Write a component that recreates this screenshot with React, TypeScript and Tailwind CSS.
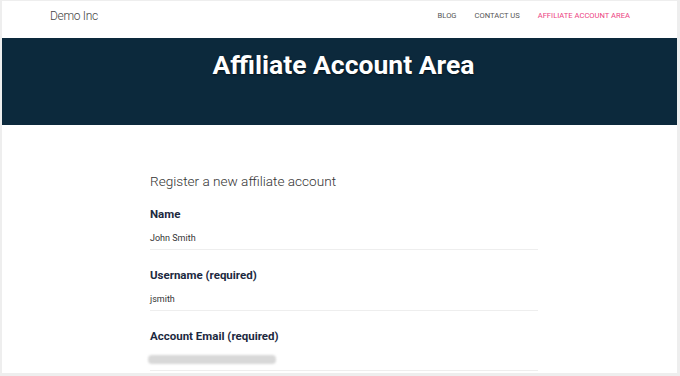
import React from 'react';

const fields = [
  { label: 'Name', value: 'John Smith' },
  { label: 'Username (required)', value: 'jsmith' },
];

export default function App() {
  return (
    <div className="w-[680px] h-[376px] overflow-hidden bg-[#eeeeee] pt-px pl-[2px] pr-[3px] pb-[3px] font-['Roboto',sans-serif]">
      <div className="h-full bg-white overflow-hidden">
        {/* Header */}
        <div className="h-[37px] flex items-start justify-between pl-[48px] pr-[47px] pt-[7px]">
          <span className="text-[12px] font-light text-[#444] tracking-tight leading-[16px]">Demo Inc</span>
          <nav className="flex items-center gap-[18px] text-[7.6px] uppercase text-[#555] leading-[16px]">
            <span>Blog</span>
            <span>Contact Us</span>
            <span className="text-[#ec3f82]">Affiliate Account Area</span>
          </nav>
        </div>

        {/* Banner */}
        <div className="h-[87px] bg-[#0c293c] flex justify-center pt-[9px] pl-[8px]">
          <h1 className="text-[26.5px] font-bold text-white leading-[36px] [text-shadow:0_1px_2px_rgba(0,0,0,0.6)]">
            Affiliate Account Area
          </h1>
        </div>

        {/* Form */}
        <div className="pl-[148px] pt-[46px] w-[536px]">
          <h2 className="text-[13.6px] font-light text-[#333] leading-[20px] mb-[15px]">
            Register a new affiliate account
          </h2>
          {fields.map((f) => (
            <div key={f.label} className="mb-[17px]">
              <div className="text-[11.5px] font-bold text-[#1c2940] leading-[16px] mb-[9px]">{f.label}</div>
              <div className="text-[9px] text-[#333] leading-[14px] pb-[4px] border-b border-[#eeeeee]">{f.value}</div>
            </div>
          ))}
          <div>
            <div className="text-[11.5px] font-bold text-[#1c2940] leading-[16px] mb-[11px]">Account Email (required)</div>
            <div className="pb-[6px] border-b border-[#eeeeee]">
              <div className="h-[9px] w-[128px] -ml-[2px] bg-[#d8d8d8] blur-[1px] rounded-sm" />
            </div>
          </div>
        </div>
      </div>
    </div>
  );
}
